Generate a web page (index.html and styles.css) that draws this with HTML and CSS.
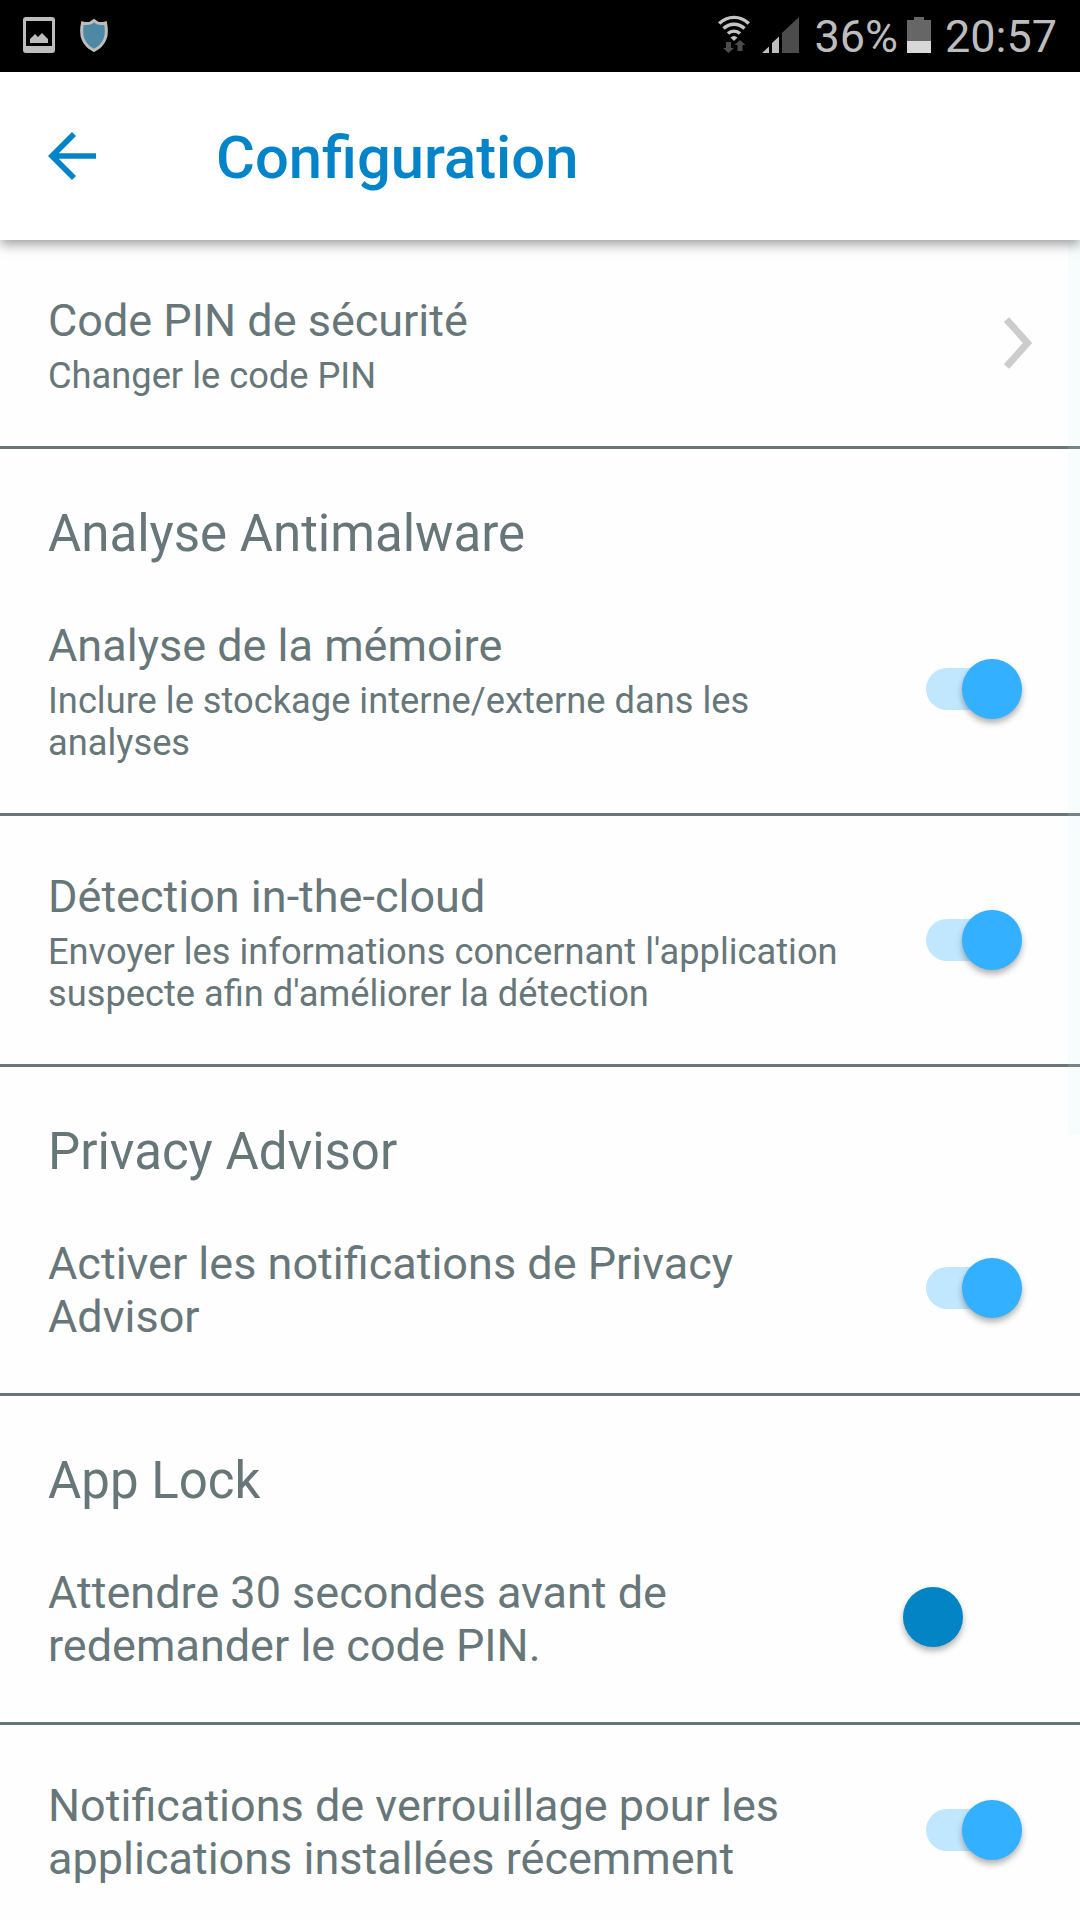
FILE: index.html
```html
<!DOCTYPE html>
<html lang="fr">
<head>
    <meta charset="UTF-8">
    <meta name="viewport" content="width=device-width, initial-scale=1.0">
    <title>Configuration</title>
    <link rel="stylesheet" href="styles.css">
</head>
<body>
    <div class="status-bar">
        <svg class="icon-picture" width="32" height="36" viewBox="0 0 32 36">
            <path fill="#bdbdbd" fill-rule="evenodd" d="M3 0h26a3 3 0 0 1 3 3v30a3 3 0 0 1-3 3H3a3 3 0 0 1-3-3V3a3 3 0 0 1 3-3zM3 4v25h26V4z"/>
            <path fill="#bdbdbd" d="M7 26v-4l5-5 3 3 4-4 6 6v4z"/>
        </svg>
        <svg class="icon-shield" width="28" height="34" viewBox="0 0 28 34">
            <path fill="#4f88a5" stroke="#bdbdbd" stroke-width="3" d="M14 2.5C11 5.5 6 6 2.500 5C1.500 10 1 16 3 21C5 26 9 30 14 32.500C19 30 23 26 25 21C27 16 26.500 10 25.500 5C22 6 17 5.500 14 2.500z"/>
        </svg>
        <div class="status-right">
            <svg class="icon-wifi" width="32" height="38" viewBox="0 0 32 38">
                <g fill="none" stroke="#c4c4c4" stroke-width="3.400">
                    <path d="M1.200 8.500a21 21 0 0 1 29.600 0"/>
                    <path d="M5.500 13.500a15 15 0 0 1 21 0"/>
                    <path d="M10 18.500a8.800 8.800 0 0 1 12 0"/>
                </g>
                <path fill="#c4c4c4" d="M12.500 22.500q3.500-3 7 0L16 26z"/>
                <path fill="#4c4c4c" d="M8 27h5v6h3l-5.500 5L5 33h3zM19.500 36v-6h-3l5.500-5 5.500 5h-3v6z"/>
            </svg>
            <svg class="icon-signal" width="37" height="36" viewBox="0 0 37 36">
                <path fill="#bdbdbd" d="M0 36l7-6.500v6.500zM10 36V26l7-6.500v16.500z"/>
                <path fill="#4c4c4c" d="M20 36V16L37 0v36z"/>
            </svg>
            <span class="percent">36%</span>
            <svg class="icon-battery" width="24" height="36" viewBox="0 0 24 36">
                <path fill="#666" d="M0 3h7V0h10v3h7v21H0z"/>
                <path fill="#d8d8d8" d="M0 24h24v12H0z"/>
            </svg>
            <span class="clock">20:57</span>
        </div>
    </div>

    <header class="toolbar">
        <svg class="back" width="48" height="48" viewBox="0 0 48 48">
            <path fill="none" stroke="#0384c8" stroke-width="5.700" d="M48 24H5M26 2L4 24l22 22"/>
        </svg>
        <h1>Configuration</h1>
    </header>

    <main class="settings">
        <div class="scrollbar"></div>

        <div class="row">
            <div class="text">
                <div class="title">Code PIN de sécurité</div>
                <div class="summary">Changer le code PIN</div>
            </div>
            <svg class="chevron" width="28" height="52" viewBox="0 0 28 52">
                <path fill="none" stroke="#ccc" stroke-width="7" d="M2.500 2.500L23.500 26l-21 23.500"/>
            </svg>
        </div>

        <h2>Analyse Antimalware</h2>
        <div class="row">
            <div class="text">
                <div class="title">Analyse de la mémoire</div>
                <div class="summary">Inclure le stockage interne/externe dans les<br>analyses</div>
            </div>
            <div class="switch on"><span class="thumb"></span></div>
        </div>
        <div class="row">
            <div class="text">
                <div class="title">Détection in-the-cloud</div>
                <div class="summary">Envoyer les informations concernant l'application<br>suspecte afin d'améliorer la détection</div>
            </div>
            <div class="switch on"><span class="thumb"></span></div>
        </div>

        <h2>Privacy Advisor</h2>
        <div class="row single">
            <div class="text">
                <div class="title">Activer les notifications de Privacy<br>Advisor</div>
            </div>
            <div class="switch on"><span class="thumb"></span></div>
        </div>

        <h2>App Lock</h2>
        <div class="row single">
            <div class="text">
                <div class="title">Attendre 30 secondes avant de<br>redemander le code PIN.</div>
            </div>
            <div class="switch off"><span class="thumb"></span></div>
        </div>
        <div class="row single">
            <div class="text">
                <div class="title">Notifications de verrouillage pour les<br>applications installées récemment</div>
            </div>
            <div class="switch on"><span class="thumb"></span></div>
        </div>
    </main>
</body>
</html>
```

FILE: styles.css
```css
* {
    box-sizing: border-box;
}

body {
    margin: 0;
    width: 1080px;
    height: 1920px;
    overflow: hidden;
    font-family: Roboto, sans-serif;
    color: #677779;
    background-color: #fefefe;
}

svg {
    display: block;
    flex-shrink: 0;
}

.status-bar {
    display: flex;
    height: 72px;
    padding: 0 23px;
    background-color: #000;
    color: #bdbdbd;
    font-size: 45px;
    line-height: 73px;
}

.icon-picture {
    margin-top: 17px;
}

.icon-shield {
    margin: 18px 0 0 25px;
}

.status-right {
    display: flex;
    margin-left: auto;
}

.icon-wifi {
    margin: 15px 12px 0 0;
}

.icon-signal {
    margin: 17px 15px 0 0;
}

.icon-battery {
    margin: 17px 14px 0 9px;
}

.toolbar {
    position: relative;
    z-index: 1;
    display: flex;
    align-items: center;
    height: 168px;
    padding: 0 48px;
    background-color: #fff;
    box-shadow: 0 4px 12px rgba(0, 0, 0, 0.4);
}

.toolbar h1 {
    margin: 4px 0 0 120px;
    font-size: 59.7px;
    font-weight: 500;
    color: #0384c8;
}

/* scroll indicator lies over the list */
.settings {
    position: relative;
}

.scrollbar {
    position: absolute;
    top: 0;
    right: 0;
    width: 12px;
    height: 895px;
    background-color: rgba(200, 240, 245, 0.13);
}

h2 {
    margin: 0;
    padding: 55px 48px 1px;
    font-size: 51px;
    font-weight: 400;
    line-height: 60px;
}

.row {
    display: flex;
    align-items: center;
    justify-content: space-between;
    padding-right: 48px;
    border-bottom: 3px solid #677779;
}

.text {
    padding: 54px 0 49px 48px;
    white-space: nowrap;
}

.single .text {
    padding-bottom: 50px;
}

.title {
    font-size: 45px;
    line-height: 53px;
}

.summary {
    margin-top: 8px;
    font-size: 36.25px;
    line-height: 42px;
}

.switch {
    display: flex;
    align-items: center;
    width: 95.5px;
    height: 42px;
    margin: 0 10.5px 1px 0;
    border-radius: 21px;
}

.thumb {
    width: 60px;
    height: 60px;
    border-radius: 50%;
    box-shadow: 0 4px 6px rgba(0, 0, 0, 0.3);
}

.on {
    justify-content: flex-end;
    background-color: #c1e7ff;
}

.on .thumb {
    background-color: #33b0ff;
}

.off {
    margin-right: 69.5px;
    width: 60px;
}

.off .thumb {
    background-color: #0384c4;
}
```
